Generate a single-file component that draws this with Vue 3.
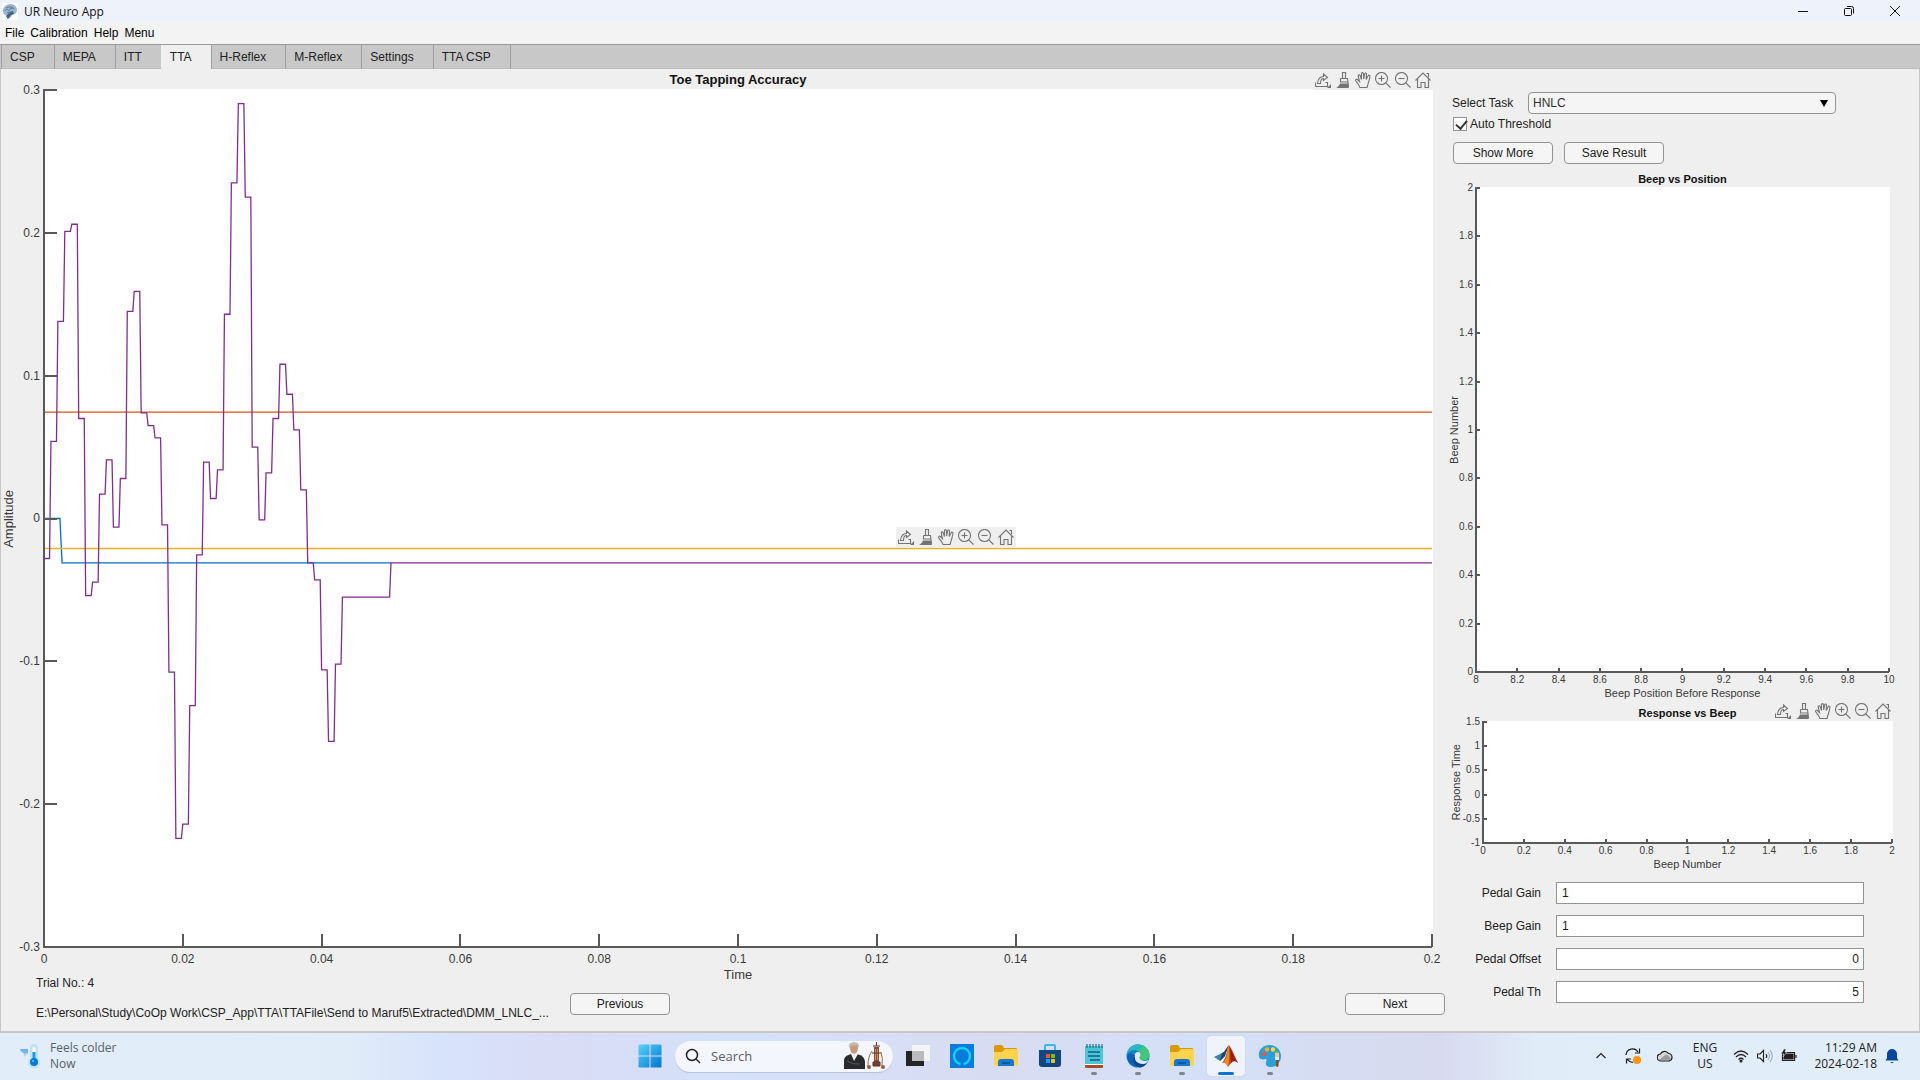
<script setup>
import { ref } from 'vue'

const menus = ['File', 'Calibration', 'Help', 'Menu']
const tabs = ['CSP', 'MEPA', 'ITT', 'TTA', 'H-Reflex', 'M-Reflex', 'Settings', 'TTA CSP']
const activeTab = ref('TTA')
const task = ref('HNLC')
const autoThreshold = ref(true)

const tools = [
  { name: 'Export', lines: ['M.500 10.500v4h12v-4h-2', 'M2.500 11.500C3 7 5 4.500 8.500 4.500V2l4 3.500-4 3V6.500C6.500 6.500 5.500 8 5.500 11.500z'], solid: 'M16 12v4h-4z' },
  { name: 'Brush', lines: ['M7.500.500h3v6h-3z', 'M5.500 6.500h7l1 9', 'M5.500 6.500v3.500h7.500'], solid: 'M5 11.500h8.500V16H1c2-1 3-2 4-4.500z' },
  { name: 'Pan', lines: ['M5 15.500C3.500 12 2 10.500.700 8.700c-.600-1 .700-2 1.700-1.200L4.500 9.500 3.200 4c-.200-1.500 1.500-1.700 1.900-.500L6.500 7.500V1.700c0-1.500 1.900-1.500 2 0L8.700 7l1-5.200c.300-1.300 2-.900 1.800.400L11.200 7.500l1.900-3.700c.700-1.200 2.100-.500 1.800.700-.500 2.500-.900 5-1.900 7.500l-.900 3.500z'] },
  { name: 'Zoom in', lines: ['M12.500 6.500a6 6 0 1 1-12 0a6 6 0 1 1 12 0', 'M10.800 10.800l4.700 4.700', 'M3.500 6.500h6', 'M6.500 3.500v6'] },
  { name: 'Zoom out', lines: ['M12.500 6.500a6 6 0 1 1-12 0a6 6 0 1 1 12 0', 'M10.800 10.800l4.700 4.700', 'M3.500 6.500h6'] },
  { name: 'Restore view', lines: ['M.500 8.500L8 1l7.500 7.500', 'M2.500 7v8.500h3.500v-5h4v5h3.500V7', 'M11.500 1.500h2v4'] }
]

// One level per millisecond, in thousandths of an amplitude unit
const levels = [
  -28, 54, 138, 201, 206, 70, -54, -44.5, 17, 41, -6, 28, 145, 159, 74, 65, 56.5, -4.5, -107.5, -224,
  -214, -131, -25.5, 39.5, 14, 34, 143, 235, 290.5, 225, 50, -1, 32, 70, 108, 87, 62, 20, -31, -43,
  -106, -156, -102, -55, -55, -55, -55, -55, -55, -55
]
const pedal = levels.map((v, i) => `${i},${-v} ${i + 0.8},${-v}`).join(' ') + ' 50,31 200,31'

const traces = [
  { color: '#0072bd', points: '0,0 2.3,0 2.6,31 50,31' },
  { color: '#d95319', points: '0,-74.5 200,-74.5' },
  { color: '#edb120', points: '0,21 200,21' },
  { color: '#7e2f8e', points: pedal }
]

const mainX = ['0', '0.02', '0.04', '0.06', '0.08', '0.1', '0.12', '0.14', '0.16', '0.18', '0.2']
const mainY = ['0.3', '0.2', '0.1', '0', '-0.1', '-0.2', '-0.3']

const sideCharts = [
  {
    id: 'position', title: 'Beep vs Position', xLabel: 'Beep Position Before Response', yLabel: 'Beep Number', toolbar: false,
    x: ['8', '8.2', '8.4', '8.6', '8.8', '9', '9.2', '9.4', '9.6', '9.8', '10'],
    y: ['2', '1.8', '1.6', '1.4', '1.2', '1', '0.8', '0.6', '0.4', '0.2', '0']
  },
  {
    id: 'response', title: 'Response vs Beep', xLabel: 'Beep Number', yLabel: 'Response Time', toolbar: true,
    x: ['0', '0.2', '0.4', '0.6', '0.8', '1', '1.2', '1.4', '1.6', '1.8', '2'],
    y: ['1.5', '1', '0.5', '0', '-0.5', '-1']
  }
]

const fields = ref([
  { id: 'pedal-gain', label: 'Pedal Gain', value: '1', numeric: false },
  { id: 'beep-gain', label: 'Beep Gain', value: '1', numeric: false },
  { id: 'pedal-offset', label: 'Pedal Offset', value: '0', numeric: true },
  { id: 'pedal-th', label: 'Pedal Th', value: '5', numeric: true }
])

const apps = [
  { name: 'Task view', icon: 'views' },
  { name: 'Alexa', icon: 'alexa' },
  { name: 'File Explorer', icon: 'folder' },
  { name: 'Microsoft Store', icon: 'store' },
  { name: 'Notepad', icon: 'notepad', running: true },
  { name: 'Edge', icon: 'edge', running: true },
  { name: 'File Explorer window', icon: 'folder', running: true },
  { name: 'MATLAB', icon: 'matlab', running: true, active: true },
  { name: 'Paint', icon: 'paint', running: true }
]

const at = (i, list) => `${(i * 100) / (list.length - 1)}%`
</script>

<template>
  <div class="desktop">
    <header class="titlebar">
      <svg class="app-icon" viewBox="0 0 16 17" aria-hidden="true">
        <path d="M0 0h16v17H0z" fill="#fff" />
        <path d="M1 9C0 5 4 1 8.500 1S15 4 15 7s-2 4.500-4.500 4.500L9 14l-3 2-1-1 1.500-3C4 13 1.500 12 1 9z" fill="#9db6cb" />
        <path d="M6 11l-2 2 2 3 3-4 3-1-1-3-3 1z" fill="#3d6485" />
        <path d="M3 8c1-2 2-2 3-1s2 0 2-1 2-1 3 0M4 5c1-1 3-1 4-1s3 0 4 2M5 10c1-1 3-1 5-1" stroke="#557b9b" fill="none" />
      </svg>
      <h1>UR Neuro App</h1>
      <div class="window-buttons">
        <button aria-label="Minimize"><svg viewBox="0 0 10 10"><path d="M0 5.500h10" /></svg></button>
        <button aria-label="Restore"><svg viewBox="0 0 10 10"><path d="M.500 3.500q0-1 1-1h5q1 0 1 1v5q0 1-1 1h-5q-1 0-1-1zM3 .500h4.500q2 0 2 2V7.500" /></svg></button>
        <button aria-label="Close"><svg viewBox="0 0 10 10"><path d="M0 0l10 10M10 0L0 10" /></svg></button>
      </div>
    </header>

    <nav class="menubar" aria-label="Menu bar">
      <button v-for="m in menus" :key="m">{{ m }}</button>
    </nav>

    <div class="tabs" role="tablist">
      <button v-for="t in tabs" :key="t" role="tab" :aria-selected="t === activeTab" :class="{ active: t === activeTab }" @click="activeTab = t">{{ t }}</button>
    </div>

    <main class="workspace">
      <section class="recording">
        <div class="chart main-chart">
          <div class="chart-head">
            <h2>Toe Tapping Accuracy</h2>
            <div class="toolbar head-tools">
              <button v-for="tool in tools" :key="tool.name" :aria-label="tool.name">
                <svg viewBox="0 0 16 16"><path v-for="d in tool.lines" :key="d" :d="d" /><path v-if="tool.solid" class="solid" :d="tool.solid" /></svg>
              </button>
            </div>
          </div>
          <div class="y-label"><span>Amplitude</span></div>
          <div class="y-ticks"><span v-for="t in mainY" :key="t">{{ t }}</span></div>
          <div class="plot">
            <svg class="axes" aria-hidden="true">
              <svg viewBox="0 -300 200 600" preserveAspectRatio="none" width="100%" height="100%">
                <polyline v-for="t in traces" :key="t.color" class="trace" :points="t.points" :stroke="t.color" />
              </svg>
              <line x1="0" y1="-1" x2="0" y2="100%" />
              <line x1="-1" y1="100%" x2="100%" y2="100%" />
              <line v-for="(t, i) in mainY" :key="'y' + t" x1="0" x2="13" :y1="at(i, mainY)" :y2="at(i, mainY)" />
            </svg>
            <div class="x-marks-row"><i v-for="t in mainX" :key="t"></i></div>
            <div class="toolbar floating-tools">
              <button v-for="tool in tools" :key="tool.name" :aria-label="tool.name">
                <svg viewBox="0 0 16 16"><path v-for="d in tool.lines" :key="d" :d="d" /><path v-if="tool.solid" class="solid" :d="tool.solid" /></svg>
              </button>
            </div>
          </div>
          <div class="x-ticks"><span v-for="t in mainX" :key="t">{{ t }}</span></div>
          <div class="x-label">Time</div>
        </div>

        <footer class="trial-bar">
          <div class="trial-info">
            <p>Trial No.: 4</p>
            <p>E:\Personal\Study\CoOp Work\CSP_App\TTA\TTAFile\Send to Maruf5\Extracted\DMM_LNLC_...</p>
          </div>
          <button class="btn">Previous</button>
          <button class="btn next">Next</button>
        </footer>
      </section>

      <aside class="panel">
        <div class="task-row">
          <label for="task">Select Task</label>
          <div class="select-box">
            <select id="task" v-model="task"><option>HNLC</option></select>
            <svg viewBox="0 0 8 7" aria-hidden="true"><path d="M0 0h8L4 7z" /></svg>
          </div>
        </div>
        <label class="check"><input v-model="autoThreshold" type="checkbox" />Auto Threshold</label>
        <div class="actions">
          <button class="btn">Show More</button>
          <button class="btn">Save Result</button>
        </div>

        <div v-for="c in sideCharts" :key="c.id" class="chart side-chart" :class="c.id">
          <div class="chart-head">
            <h2>{{ c.title }}</h2>
            <div v-if="c.toolbar" class="toolbar head-tools">
              <button v-for="tool in tools" :key="tool.name" :aria-label="tool.name">
                <svg viewBox="0 0 16 16"><path v-for="d in tool.lines" :key="d" :d="d" /><path v-if="tool.solid" class="solid" :d="tool.solid" /></svg>
              </button>
            </div>
          </div>
          <div class="y-label"><span>{{ c.yLabel }}</span></div>
          <div class="y-ticks"><span v-for="t in c.y" :key="t">{{ t }}</span></div>
          <div class="plot">
            <svg class="axes" aria-hidden="true">
              <line x1="0" y1="-1" x2="0" y2="100%" />
              <line x1="-1" y1="100%" x2="100%" y2="100%" />
              <line v-for="(t, i) in c.y" :key="'y' + t" x1="0" x2="4" :y1="at(i, c.y)" :y2="at(i, c.y)" />
            </svg>
            <div class="x-marks-row"><i v-for="t in c.x" :key="t"></i></div>
          </div>
          <div class="x-ticks"><span v-for="t in c.x" :key="t">{{ t }}</span></div>
          <div class="x-label">{{ c.xLabel }}</div>
        </div>

        <form class="fields" @submit.prevent>
          <template v-for="f in fields" :key="f.id">
            <label :for="f.id">{{ f.label }}</label>
            <input :id="f.id" v-model="f.value" type="text" :class="{ numeric: f.numeric }" />
          </template>
        </form>
      </aside>
    </main>

    <footer class="taskbar">
      <div class="weather">
        <svg viewBox="0 0 20 24" aria-hidden="true">
          <path d="M0 5h8v3l-1 3-1-3-1 5-1-5-1 2-1-3-1 1z" fill="#6db2ee" />
          <path d="M10 4a4 4 0 0 1 8 0v10a6 6 0 1 1-8 0z" fill="#c6dff5" />
          <path d="M12.500 4q1.500-2 3 0v12h-3z" fill="#f7fbff" /><path d="M12.500 8h3v8h-3z" fill="#159be8" />
          <circle cx="14" cy="18" r="4" fill="#087bd5" /><circle cx="13" cy="17" r="1" fill="#75caff" />
        </svg>
        <p>Feels colder<br />Now</p>
      </div>

      <div class="dock">
        <button class="app" aria-label="Start">
          <svg viewBox="0 0 24 24">
            <defs><linearGradient id="win" x1="0" y1="0" x2="1" y2="1"><stop offset="0" stop-color="#55d3fb" /><stop offset="1" stop-color="#0574cf" /></linearGradient></defs>
            <path d="M1.500.500H11.500v11H.500v-10q0-1 1-1zM12.500.500h10q1 0 1 1v10h-11zM.500 12.500h11v11h-10q-1 0-1-1zM12.500 12.500h11v10q0 1-1 1h-10z" fill="url(#win)" />
          </svg>
        </button>
        <label class="search">
          <svg class="lens" viewBox="0 0 16 16" aria-hidden="true"><circle cx="7" cy="7" r="5.500" /><path d="M11 11l4 4" /></svg>
          <input type="text" placeholder="Search" aria-label="Search" />
          <svg class="doodle" viewBox="0 0 42 28" aria-hidden="true">
            <path d="M1 27V18q0-4 7-6h6q8 2 8 8v7z" fill="#292a2d" />
            <path d="M8 12l3 7 4-7-1-3H8z" fill="#f1eee8" />
            <ellipse cx="11" cy="6" rx="4" ry="5.500" fill="#c69b7c" />
            <path d="M6 6q-1-6 5-6t5 6l-2-3q-4 1-6 0z" fill="#c3bdb4" />
            <path d="M4 19q6 4 13 3" stroke="#55565b" fill="none" />
            <path d="M31 5h5v15h-5z" fill="#8d4e39" /><path d="M32 7h1v11h-1zM34 7h1v11h-1z" fill="#d28d64" />
            <path d="M30 4h7M33.500 0v4M29 11h9M30 20h7v4h-7z" stroke="#5c3226" fill="#74402f" />
            <path d="M29 9q-4 5-4 15M38 10q2 6 1 14" stroke="#a66544" fill="none" /><circle cx="26" cy="25" r="2" fill="#a4593b" /><circle cx="40" cy="25" r="2" fill="#a4593b" />
          </svg>
        </label>
        <button v-for="a in apps" :key="a.name" class="app" :class="{ running: a.running, active: a.active }" :aria-label="a.name">
          <svg viewBox="0 0 24 24">
            <template v-if="a.icon === 'views'">
              <path d="M0 7h18v15H0z" fill="#242424" /><path d="M6 1h18v16H6z" fill="#f4f4f6" /><path d="M6 7h12v10H6z" fill="#b9bbbe" />
            </template>
            <template v-else-if="a.icon === 'alexa'">
              <path d="M0 0h24v24H0z" fill="#087bdc" /><path d="M10.500 20a8 8 0 1 1 3 0" fill="none" stroke="#12d4f4" stroke-width="2.200" />
            </template>
            <template v-else-if="a.icon === 'folder'">
              <path d="M0 3q0-2 2-2h6l2 3h12q1 0 1 1v8H0z" fill="#d99a09" />
              <path d="M0 8h8l3-3h11q2 0 2 2v13q0 2-2 2H2q-2 0-2-2z" fill="#ffd34d" />
              <path d="M4 22v-4q0-3 3-3h10q3 0 3 3v4z" fill="#1479cf" /><path d="M8 18h8v2H8z" fill="#0b58a0" />
            </template>
            <template v-else-if="a.icon === 'store'">
              <path d="M7 6V2q0-1 1-1h8q1 0 1 1v4" fill="none" stroke="#35b9ee" stroke-width="2" />
              <path d="M1 6h22v14q0 3-3 3H4q-3 0-3-3z" fill="#124680" />
              <path d="M8 10h4v4H8z" fill="#f35325" /><path d="M13 10h4v4h-4z" fill="#81bc06" /><path d="M8 15h4v4H8z" fill="#05a6f0" /><path d="M13 15h4v4h-4z" fill="#ffba08" />
            </template>
            <template v-else-if="a.icon === 'notepad'">
              <path d="M3 2h18v20H3z" fill="#4cc5da" /><path d="M3 20h18v3q0 1-1 1H4q-1 0-1-1z" fill="#a64e23" /><path d="M3 20h18v1H3z" fill="#fff" />
              <path d="M5 0v4M8 0v4M11 0v4M14 0v4M17 0v4M20 0v4" stroke="#155872" /><path d="M6 8h12M6 12h12M8 16h10" stroke="#126078" stroke-width="1.500" />
            </template>
            <template v-else-if="a.icon === 'edge'">
              <circle cx="12" cy="12" r="11.500" fill="#1580cf" />
              <path d="M1 10C2 3 7 .500 12 .500c7 0 11.500 5 11.500 10 0 4-3 6-6 6-3 0-4-1-4-2.500s1-1 1-3C14.500 8 11 6 8 6 4 6 2 8 1 10z" fill="#43c879" />
              <path d="M1 10C2 3 7 .500 12 .500q4 0 7 2.500C14 3 15 6 12 7 8 4 3 6 1 10z" fill="#29b7c6" />
              <path d="M8 13c0-3 2-5 4-5s2.500 1.500 2.500 3-1 1.500-1 3 2 3 5 3q2 0 4-1c-1 2-3 4-5 4-5 0-9.500-3-9.500-7z" fill="#e0eaf8" />
              <path d="M9 11q-4 8 6 12C6 24 1 18 1 12q2-5 8-1z" fill="#0d61b4" /><path d="M9 12c-1 6 4 9 9 8q2 0 3-1-3 4-7 4.500C8 22 5 16 9 12z" fill="#0a458e" />
            </template>
            <template v-else-if="a.icon === 'matlab'">
              <path d="M0 13l8-4 3 3-5 5z" fill="#3b83a8" /><path d="M8 9c3-1 4-5 7-8l-4 11-5 5z" fill="#1f4969" />
              <path d="M15 1c3 4 6 12 9 18-4-3-6-2-10 4-1-3-3-5-6-4 4-4 5-12 7-18z" fill="#c84118" /><path d="M15 1c0 7 1 14-1 22-1-3-3-5-5-4 5-5 4-13 6-18z" fill="#f58a25" /><path d="M16 4c3 5 5 11 8 15-4-3-5-2-7 0z" fill="#8b2414" />
            </template>
            <template v-else>
              <path d="M12 1C5 1 0 6 1 12c0 4 4 4 6 3 2 0 2 1 1 3-1 4 2 5 5 5 6 0 10-5 10-11S18 1 12 1z" fill="#2c9fd8" />
              <circle cx="6" cy="10" r="2.200" fill="#e85b3f" /><circle cx="9" cy="5.500" r="2.200" fill="#f7ad25" /><circle cx="15" cy="5.500" r="2.200" fill="#f8d73f" /><circle cx="19" cy="9" r="2" fill="#69bf45" />
              <path d="M17 9h4v5h-4z" fill="#edc79a" /><path d="M17 13h4v3h-4z" fill="#e3e3e3" /><path d="M18 16h2.500v6q-1 2-2.500 0z" fill="#8b4c22" />
            </template>
          </svg>
        </button>
      </div>

      <div class="tray">
        <button aria-label="Show hidden icons"><svg viewBox="0 0 16 16"><path d="M3.500 10L8 5.500l4.500 4.500" /></svg></button>
        <button aria-label="Updates"><svg viewBox="0 0 16 16"><path d="M1 7a6.500 6.500 0 0 1 12-3M14.500.500V5H10M8 14.500Q4 14 2 11M1.500 15.500V11H6" /><circle cx="12" cy="12" r="4" fill="#f9940d" stroke="none" /></svg></button>
        <button aria-label="OneDrive"><svg viewBox="0 0 16 16"><path d="M4 13a3.500 3.500 0 0 1-.500-7A4.500 4.500 0 0 1 11.500 5.500 3.800 3.800 0 0 1 12 13z" fill="#d5d7d9" /><path d="M2 12l6-5q3-1 6 4l-2 1H4z" fill="#999b9e" stroke="none" /></svg></button>
        <button class="language">ENG<br />US</button>
        <button class="status" aria-label="Network, volume and battery">
          <svg viewBox="0 0 16 16"><path d="M1 6.500q7-7 14 0M3 9q5-5 10 0M5.500 11.500q2.500-2.500 5 0" /><circle cx="8" cy="13" r="1" fill="#222" /></svg>
          <svg viewBox="0 0 16 16"><path d="M.500 6h2.500l3.500-3.500v11L3 10H.500zM9 6q1.500 2 0 4" /><path d="M11 4q3 4 0 8M13 2q4.500 6 0 12" stroke="#a5b0b9" /></svg>
          <svg viewBox="0 0 16 16"><path d="M1.500 4.500h12v8h-12zM15 7v3" /><path d="M3 6h9v5H3z" fill="#222" /><path d="M3 1L0 6h3l-1 3 4-5H4l1-3z" fill="#222" stroke="#e1edf8" stroke-width=".5" /></svg>
        </button>
        <button class="clock">11:29 AM<br />2024-02-18</button>
        <button aria-label="Notifications"><svg viewBox="0 0 16 16"><path d="M8 1a5 5 0 0 1 5 5v4l1.500 2.500h-13L3 10V6a5 5 0 0 1 5-5zM6 14h4q-2 2-4 0z" fill="#06479b" stroke="none" /></svg></button>
      </div>
    </footer>
  </div>
</template>

<style>
body { margin: 0; }
</style>

<style scoped>
* { box-sizing: border-box; }
h1, h2, p { margin: 0; font-weight: normal; }
button { margin: 0; padding: 0; border: 0; background: none; color: inherit; font: inherit; }

.desktop {
  display: flex;
  flex-direction: column;
  min-height: 100vh;
  background: #efefef;
  color: #222;
  font: 12px/16px "Liberation Sans", Arial, sans-serif;
}

.titlebar { display: flex; align-items: center; height: 22px; padding: 0 2px; background: #edf2fb; color: #111; }
.app-icon { width: 16px; height: 17px; }
.titlebar h1 { margin-left: 6px; padding-top: 2px; font: 12px/16px "Open Sans", "Noto Sans", sans-serif; }
.window-buttons { display: flex; margin-left: auto; }
.window-buttons button { display: flex; align-items: center; justify-content: center; width: 46px; height: 20px; }
.window-buttons svg { width: 10px; height: 10px; overflow: visible; fill: none; stroke: #111; }

.menubar { display: flex; gap: 6px; height: 22px; padding: 0 5px; background: #f3f3f3; color: #000; }

.tabs { display: flex; height: 25px; padding-left: 1px; border-top: 1px solid #989898; border-bottom: 1px solid #bcbcbc; background: #c8c8c8; }
.tabs button { height: 24px; padding: 0 19px 0 8px; border-left: 1px solid #a0a0a0; }
.tabs button:last-child { border-right: 1px solid #a0a0a0; }
.tabs button.active { border-left-color: #efefef; background: #efefef; }

.workspace { display: flex; flex: 1; border: solid #c6c6c6; border-width: 0 1px 2px; }
.recording { display: flex; flex: 1; flex-direction: column; min-width: 0; }

/* Charts */
.chart {
  display: grid;
  grid-template-areas: "head head head" "ylabel yticks plot" ". . xticks" ". . xlabel";
  color: #3a3a3a;
}
.chart-head { grid-column: 3; grid-row: 1; position: relative; z-index: 1; display: flex; align-items: flex-end; justify-content: center; height: 20px; }
.chart-head h2 { color: #111; font-weight: bold; line-height: 16px; }
.y-label { grid-area: ylabel; display: flex; align-items: center; justify-content: center; }
.y-label span { writing-mode: vertical-rl; transform: rotate(180deg); white-space: nowrap; }
.y-ticks { grid-area: yticks; display: flex; flex-direction: column; justify-content: space-between; padding: 1px 3px 1px 0; }
.y-ticks span { display: flex; align-items: center; justify-content: flex-end; height: 0; }
.plot { grid-area: plot; position: relative; display: flex; align-items: flex-end; padding: 1px; background: #fff; }
.axes { position: absolute; top: 1px; left: 1px; width: calc(100% - 2px); height: calc(100% - 2px); overflow: visible; }
.axes line { stroke: #595959; stroke-width: 2; shape-rendering: crispEdges; }
.trace { fill: none; stroke-width: 1.3px; vector-effect: non-scaling-stroke; }
.x-marks-row { position: relative; display: flex; flex: 1; justify-content: space-between; margin: 0 -1px; }
.x-marks-row i { width: 2px; height: 4px; background: #595959; }
.x-ticks { grid-area: xticks; display: flex; justify-content: space-between; padding: 0 1px; }
.x-ticks span { display: flex; justify-content: center; width: 0; }
.x-label { grid-area: xlabel; text-align: center; line-height: 12px; }

.main-chart { flex: 1; grid-template-columns: 16px 26px minmax(0, 1fr); grid-template-rows: 20px minmax(400px, 1fr) 21px 12px; padding-right: 15px; font-size: 12px; }
.main-chart h2, .main-chart .x-label, .main-chart .y-label { font-size: 13px; }
.main-chart h2 { line-height: 18px; }
.main-chart .x-ticks { line-height: 23px; }
.main-chart .x-marks-row i { height: 13px; }
.main-chart .head-tools { bottom: -1px; }

.side-chart { grid-template-columns: 12px 15px minmax(0, 1fr); grid-template-rows: 20px minmax(120px, 1fr) 14px 12px; font-size: 10px; }
.side-chart h2, .side-chart .x-label, .side-chart .y-label { font-size: 11px; }
.side-chart .y-ticks { padding-right: 2px; }
.side-chart .x-ticks { line-height: 14px; }
.side-chart.position { flex: 1; margin: 3px 29px 2px 0; }
.side-chart.response { grid-template-columns: 12px 20px minmax(0, 1fr); grid-template-rows: 20px 123px 14px 12px; margin: 0 26px 12px 2px; }

.toolbar { display: flex; background: #efefef; }
.toolbar button { display: flex; align-items: center; justify-content: center; width: 20px; height: 20px; }
.toolbar svg { width: 16px; height: 16px; fill: none; stroke: #747474; stroke-width: 1.1; }
.toolbar .solid { fill: #747474; stroke: none; }
.head-tools { position: absolute; right: 0; bottom: 0; }
.floating-tools { position: absolute; top: 51%; left: 61.4%; }

/* Controls */
.btn { width: 100px; height: 22px; border: 1px solid #939393; border-radius: 4px; background: #f5f5f5; line-height: 20px; }
.trial-bar { display: flex; align-items: flex-start; gap: 20px; height: 54px; margin-top: -4px; padding: 0 3px 0 35px; }
.trial-info { display: flex; flex-direction: column; gap: 18px; width: 514px; line-height: 12px; white-space: nowrap; }
.trial-bar .btn { margin-top: 16px; }
.trial-bar .next { margin-left: auto; }

.panel { display: flex; flex: 0 0 471px; flex-direction: column; padding: 23px 0 28px; }
.task-row { display: flex; align-items: center; padding-left: 4px; }
.task-row label { width: 76px; }
.select-box { position: relative; flex: 1; margin-right: 83px; }
.select-box select { display: block; width: 100%; height: 22px; padding: 0 4px; border: 1px solid #939393; border-radius: 4px; appearance: none; background: #f5f5f5; color: #333; font: inherit; }
.select-box svg { position: absolute; top: 8px; right: 8px; width: 8px; height: 7px; pointer-events: none; }
.check { display: flex; align-items: center; gap: 3px; height: 14px; margin: 3px 0 11px 5px; }
.check input { position: relative; width: 14px; height: 14px; margin: 0; border: 1px solid #939393; appearance: none; background: #fff; }
.check input:checked::after { content: ""; position: absolute; top: 0; left: 4px; width: 5px; height: 9px; border: solid #333; border-width: 0 2px 2px 0; transform: rotate(40deg); }
.actions { display: flex; gap: 11px; padding-left: 5px; }

.fields { display: grid; grid-template-columns: 93px 1fr; gap: 11px 15px; margin-right: 55px; }
.fields label { line-height: 22px; text-align: right; }
.fields input { width: 100%; height: 22px; padding: 0 5px; border: 1px solid #939393; border-radius: 0; background: #fff; color: #222; font: inherit; }
.fields .numeric { padding-right: 4px; text-align: right; }

/* Taskbar */
.taskbar {
  display: grid;
  grid-template-columns: 1fr auto 1fr;
  align-items: center;
  height: 47px;
  padding-bottom: 1px;
  background: linear-gradient(90deg, #e1edf8 0%, #e1ecf9 18%, #d7e3fb 23%, #d9dcf5 29%, #d4e1f9 37%, #d8dcf2 52%, #d4e0f7 62%, #d7daef 75%, #e0ecf8 80%, #e1eef9 100%);
  color: #222;
  font: 12px/16px "Open Sans", "Noto Sans", sans-serif;
}
.weather { display: flex; align-items: center; gap: 10px; padding-left: 20px; color: #59616a; }
.weather svg { width: 20px; height: 24px; }
.dock { display: flex; align-items: center; }
.app { position: relative; display: flex; align-items: center; justify-content: center; width: 44px; height: 40px; }
.app svg { width: 24px; height: 24px; }
.app.active::before { content: ""; position: absolute; inset: 0 3px; border-radius: 4px; background: #eef3fc; box-shadow: 0 0 1px #aab6ca; }
.app.active svg { position: relative; }
.app.running::after { content: ""; position: absolute; bottom: 1px; left: 19px; width: 6px; height: 3px; border-radius: 2px; background: #80848e; }
.app.active::after { left: 14px; width: 16px; background: #0875d3; }
.search { display: flex; align-items: center; width: 218px; height: 31px; margin: 0 3px; padding: 0 8px 0 10px; border-radius: 16px; background: #f3f6fd; box-shadow: 0 1px 1px #b9c3d8; }
.lens { width: 16px; height: 16px; fill: none; stroke: #222; stroke-width: 1.5; }
.search input { flex: 1; min-width: 0; margin-left: 10px; padding: 0; border: 0; background: none; font: 13px/16px "Open Sans", "Noto Sans", sans-serif; }
.search input::placeholder { color: #5c6068; opacity: 1; }
.doodle { width: 42px; height: 28px; }
.tray { display: flex; align-items: center; justify-content: flex-end; gap: 16px; padding-right: 20px; }
.tray button { display: flex; white-space: nowrap; }
.tray svg { width: 16px; height: 16px; fill: none; stroke: #222; stroke-width: 1.2; }
.tray .language { display: block; width: 28px; margin: 0 -2px 0 2px; text-align: center; }
.tray .status { gap: 8px; }
.tray .clock { display: block; width: 64px; margin: 0 -9px 0 0; text-align: right; }
</style>
